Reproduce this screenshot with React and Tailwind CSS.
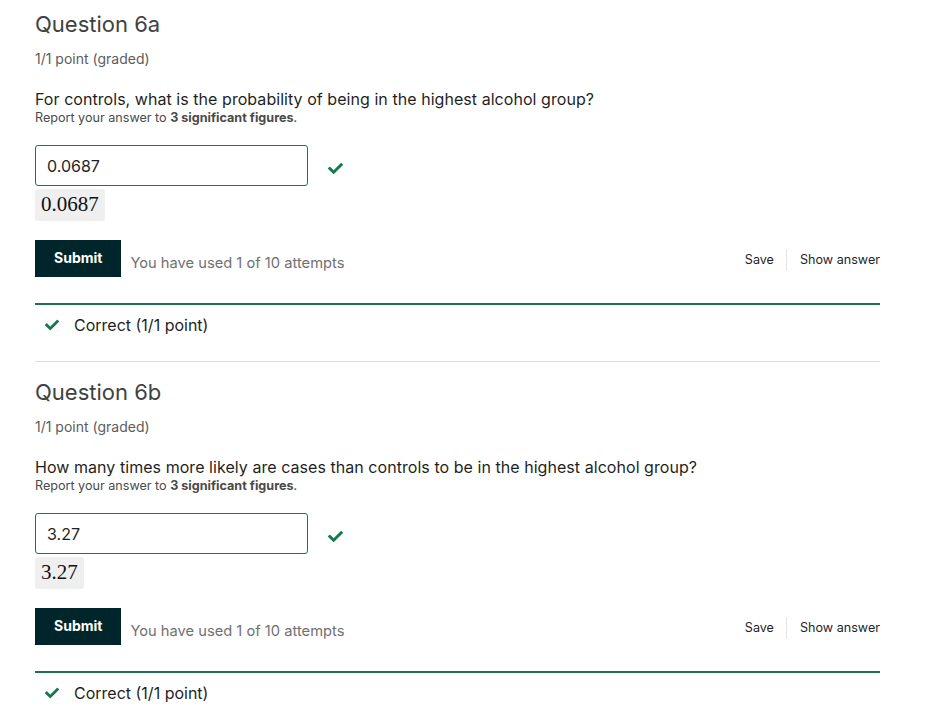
import { FaCheck } from "react-icons/fa";

const questions = [
  {
    id: "6a",
    prompt: "For controls, what is the probability of being in the highest alcohol group?",
    answer: "0.0687",
  },
  {
    id: "6b",
    prompt: "How many times more likely are cases than controls to be in the highest alcohol group?",
    answer: "3.27",
  },
];

function Question({ q, first }) {
  return (
    <section className={first ? "pt-[10px]" : "pt-[16px]"}>
      <h2 className="text-[22px] leading-[28px] font-normal text-[#414141]">Question {q.id}</h2>
      <p className="mt-[11px] text-[14px] leading-[20px] text-[#5c5c5c]">1/1 point (graded)</p>

      <p className="mt-[20px] text-[16px] leading-[20px] tracking-[0.05px] text-[#1f1f1f]">{q.prompt}</p>
      <p className="mt-[1px] text-[12.6px] leading-[16px] text-[#4a4a4a]">
        Report your answer to <span className="font-bold">3 significant figures</span>.
      </p>

      <div className="mt-[19px] flex items-center">
        <div className="flex h-[41px] w-[273px] items-center rounded-[3px] border border-[#1a7550] px-[11px] text-[16px] text-[#1f1f1f]">
          {q.answer}
        </div>
        <FaCheck className="ml-[20px] mt-[5px] text-[#16784f]" size={15} />
      </div>
      <div className="mt-[3px] inline-flex h-[32px] items-center rounded-[3px] bg-[#efefef] px-[6px] text-[21px] text-[#111] [font-family:'Liberation_Serif','DejaVu_Serif',serif]">
        {q.answer}
      </div>

      <div className="mt-[19px] flex items-center">
        <button className="h-[37px] rounded-none bg-[#00262b] px-[19px] pb-[2px] text-[14px] font-bold text-white">
          Submit
        </button>
        <span className="ml-[9px] mt-[9px] text-[14.7px] text-[#707070]">You have used 1 of 10 attempts</span>
        <div className="ml-auto mt-[3px] flex items-center text-[12.6px] text-[#1f1f1f]">
          <span className="pr-[12px]">Save</span>
          <span className="h-[22px] w-px bg-[#e4e4e4]" />
          <span className="pl-[13px]">Show answer</span>
        </div>
      </div>

      <div className="mt-[26px] h-[2px] bg-[#1a7550]" />
      <div className="mt-[8px] flex h-[24px] items-center text-[16px] text-[#1f1f1f]">
        <FaCheck className="ml-[10px] mr-[15px] text-[#16784f]" size={14} />
        Correct (1/1 point)
      </div>
      <div className="mt-[24px] h-px bg-[#dcdcdc]" />
    </section>
  );
}

export default function App() {
  return (
    <div className="min-h-screen bg-white [font-family:Inter,'Liberation_Sans',sans-serif]">
      <div className="ml-[35px] w-[845px]">
        {questions.map((q, i) => (
          <Question key={q.id} q={q} first={i === 0} />
        ))}
      </div>
    </div>
  );
}
